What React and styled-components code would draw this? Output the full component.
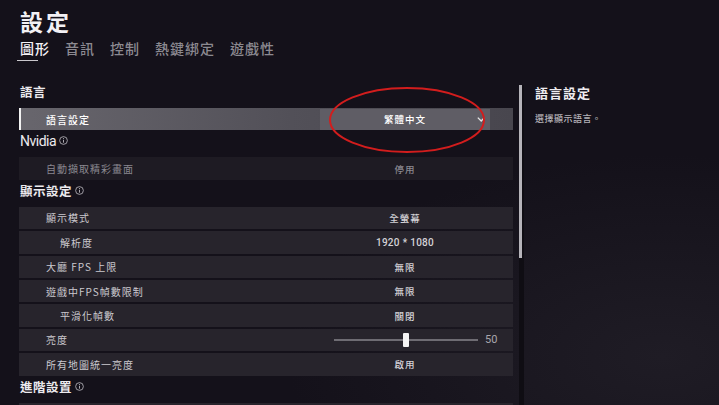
import React from 'react';
import styled, { createGlobalStyle } from 'styled-components';

const GlobalStyle = createGlobalStyle`
  html, body {
    margin: 0;
    padding: 0;
  }
  body {
    width: 719px;
    height: 405px;
    overflow: hidden;
    background: #14111a;
    font-family: "Noto Sans CJK TC", "Noto Sans", sans-serif;
    color: #e8e6ea;
  }
`;

const Screen = styled.div`
  width: 719px;
  height: 405px;
  box-sizing: border-box;
  padding: 6px 0 0 20px;
  overflow: hidden;
  background: radial-gradient(ellipse at 92% 88%, #1f1c25 0%, rgba(20, 17, 26, 0) 40%), #14111a;
  display: flex;
  flex-direction: column;

  & > * {
    flex-shrink: 0;
  }
`;

const Title = styled.h1`
  margin: 0;
  font-size: 23px;
  font-weight: 700;
  letter-spacing: 3px;
  line-height: 30px;
  color: #f2f0f4;
`;

const Tabs = styled.nav`
  display: flex;
  gap: 15px;
  margin-top: 2px;
`;

const Tab = styled.div`
  position: relative;
  font-size: 14px;
  font-weight: 500;
  letter-spacing: 1px;
  line-height: 20px;
  color: ${p => (p.$active ? '#f4f2f6' : '#8c8a91')};

  &::after {
    content: '';
    display: ${p => (p.$active ? 'block' : 'none')};
    position: absolute;
    left: -3px;
    top: 22px;
    width: 21px;
    height: 1px;
    background: #c9c7cc;
  }
`;

const Body = styled.div`
  display: flex;
  height: 330px;
  margin-top: 23px;
  margin-left: -1px;
`;

const SettingsList = styled.div`
  width: 494px;
  flex-shrink: 0;
  display: flex;
  flex-direction: column;

  & > * {
    flex-shrink: 0;
  }
`;

const Heading = styled.div`
  height: 27px;
  box-sizing: border-box;
  padding: 0 0 6px 1px;
  display: flex;
  align-items: center;
  gap: 3px;
  font-size: ${p => (p.$latin ? '14px' : '12.5px')};
  font-family: ${p => (p.$latin ? 'Roboto, "Noto Sans", sans-serif' : 'inherit')};
  font-weight: ${p => (p.$latin ? 400 : 700)};
  letter-spacing: ${p => (p.$latin ? '-0.5px' : '0.5px')};
  color: #eceaee;
`;

const Rows = styled.div`
  display: flex;
  flex-direction: column;
  gap: 2px;

  & > * {
    flex-shrink: 0;
  }
`;

const Row = styled.div`
  position: relative;
  height: 22.4px;
  display: grid;
  grid-template-columns: 301px 170px 1fr;
  align-items: center;
  background: ${p =>
    p.$selected
      ? 'linear-gradient(90deg, #68666d 0%, #525058 55%, #48464e 100%)'
      : p.$dim
      ? '#1e1b23'
      : '#27242c'};
  box-shadow: ${p => (p.$selected ? 'inset 2px 0 0 #f2f2f2' : 'none')};
`;

const Label = styled.div`
  padding-left: ${p => (p.$indent ? '41px' : '27px')};
  font-size: 10px;
  letter-spacing: 1px;
  font-weight: ${p => (p.$selected ? 500 : 400)};
  color: ${p => (p.$selected ? '#ffffff' : p.$dim ? '#8a8890' : '#cbc9cf')};
  white-space: nowrap;
`;

const Value = styled.div`
  text-align: center;
  font-size: ${p => (p.$latin ? '10px' : '9.5px')};
  font-family: ${p => (p.$latin ? 'Roboto, "Noto Sans CJK TC", sans-serif' : 'inherit')};
  letter-spacing: ${p => (p.$latin ? '0.3px' : '1px')};
  font-weight: 500;
  color: ${p => (p.$dim ? '#8a8890' : '#d4d2d7')};
`;

const Dropdown = styled.div`
  position: relative;
  height: 21px;
  display: flex;
  align-items: center;
  justify-content: center;
  background: #5f5d65;
  font-size: 9.5px;
  letter-spacing: 1px;
  font-weight: 500;
  color: #ffffff;

  svg {
    position: absolute;
    right: 5px;
    top: 8px;
  }
`;

const Slider = styled.div`
  display: flex;
  align-items: center;
  padding-left: 14px;
  white-space: nowrap;
`;

const Track = styled.div`
  position: relative;
  flex-shrink: 0;
  width: 144px;
  height: 2px;
  background: #6e6c73;
`;

const Thumb = styled.div`
  position: absolute;
  left: 69px;
  top: -6px;
  width: 6px;
  height: 14px;
  border-radius: 1px;
  background: #f4f4f4;
`;

const SliderValue = styled.span`
  margin-left: 7px;
  font-family: Roboto, sans-serif;
  font-size: 11px;
  color: #a9a7ad;
`;

const Ring = styled.svg`
  position: absolute;
  left: 308px;
  top: -23px;
  z-index: 2;
  pointer-events: none;
`;

const ScrollTrack = styled.div`
  width: 5px;
  flex-shrink: 0;
  margin: 4px 0 0 6px;
  background: #0f0d13;
`;

const ScrollThumb = styled.div`
  width: 3px;
  height: 173px;
  background: #b6b4ba;
`;

const Side = styled.aside`
  padding: 3px 0 0 11px;
`;

const SideTitle = styled.div`
  font-size: 13px;
  font-weight: 700;
  letter-spacing: 1px;
  line-height: 17px;
  color: #eeecf0;
`;

const SideText = styled.div`
  margin-top: 11px;
  font-size: 9px;
  font-weight: 500;
  letter-spacing: 0.5px;
  color: #b4b2b8;
`;

const Info = () => (
  <svg width="9" height="9" viewBox="0 0 10 10">
    <circle cx="5" cy="5" r="4.3" fill="none" stroke="#bdbbc1" strokeWidth="0.9" />
    <line x1="5" y1="4.3" x2="5" y2="7.4" stroke="#bdbbc1" strokeWidth="1" />
    <circle cx="5" cy="2.9" r="0.6" fill="#bdbbc1" />
  </svg>
);

const Chevron = () => (
  <svg width="8" height="5" viewBox="0 0 8 5">
    <polyline points="0.8,0.6 4.2,4 7.2,0.8" fill="none" stroke="#e6e6e6" strokeWidth="1.3" />
  </svg>
);

const displayRows = [
  { label: '顯示模式', value: '全螢幕' },
  { label: '解析度', value: '1920 * 1080', indent: true, latin: true },
  { label: '大廳 FPS 上限', value: '無限' },
  { label: '遊戲中FPS幀數限制', value: '無限' },
  { label: '平滑化幀數', value: '關閉', indent: true },
  { label: '亮度', slider: 50 },
  { label: '所有地圖統一亮度', value: '啟用' },
];

export default function App() {
  return (
    <Screen>
      <GlobalStyle />
      <Title>設定</Title>
      <Tabs>
        <Tab $active>圖形</Tab>
        <Tab>音訊</Tab>
        <Tab>控制</Tab>
        <Tab>熱鍵綁定</Tab>
        <Tab>遊戲性</Tab>
      </Tabs>

      <Body>
        <SettingsList>
          <Heading>語言</Heading>
          <Rows>
            <Row $selected>
              <Label $selected>語言設定</Label>
              <Dropdown>
                繁體中文
                <Chevron />
              </Dropdown>
              <Ring width="160" height="70" viewBox="0 0 160 70">
                <ellipse cx="80" cy="35" rx="77" ry="32" fill="none" stroke="#d21d1d" strokeWidth="2" />
              </Ring>
            </Row>
          </Rows>

          <Heading $latin>
            Nvidia <Info />
          </Heading>
          <Rows>
            <Row $dim>
              <Label $dim>自動擷取精彩畫面</Label>
              <Value $dim>停用</Value>
            </Row>
          </Rows>

          <Heading>
            顯示設定 <Info />
          </Heading>
          <Rows>
            {displayRows.map(r => (
              <Row key={r.label}>
                <Label $indent={r.indent}>{r.label}</Label>
                {r.slider !== undefined ? (
                  <Slider>
                    <Track>
                      <Thumb />
                    </Track>
                    <SliderValue>{r.slider}</SliderValue>
                  </Slider>
                ) : (
                  <Value $latin={r.latin}>{r.value}</Value>
                )}
              </Row>
            ))}
          </Rows>

          <Heading>
            進階設置 <Info />
          </Heading>
          <Rows>
            <Row>
              <Label />
            </Row>
          </Rows>
        </SettingsList>

        <ScrollTrack>
          <ScrollThumb />
        </ScrollTrack>

        <Side>
          <SideTitle>語言設定</SideTitle>
          <SideText>選擇顯示語言。</SideText>
        </Side>
      </Body>
    </Screen>
  );
}
